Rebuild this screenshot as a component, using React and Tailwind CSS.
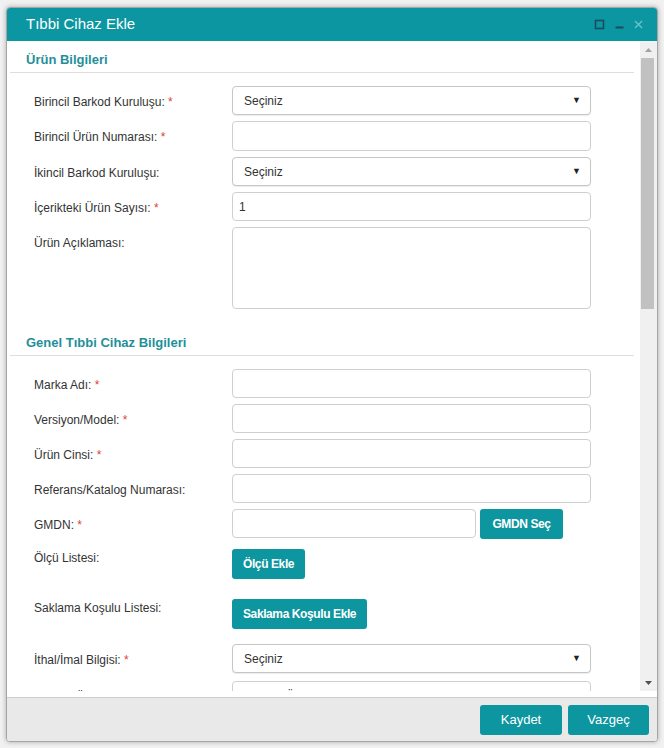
import React from 'react';

const font = { fontFamily: '"Liberation Sans", Arial, sans-serif' };

function Req() {
  return <span className="text-[#e0403a]"> *</span>;
}

function Label({ children, req, top = 'pt-[8px]' }) {
  return (
    <div className={`w-[198px] shrink-0 text-[12px] leading-[17px] text-[#333] ${top}`}>
      {children}
      {req && <Req />}
    </div>
  );
}

function TextBox({ value = '', h = 'h-[29px]', w = 'w-[359px]' }) {
  return (
    <div className={`${h} ${w} rounded-[4px] border border-[#cfcfcf] bg-white pl-[6px] flex items-center text-[12px] text-[#333]`}>
      {value}
    </div>
  );
}

function SelectBox({ text = 'Seçiniz' }) {
  return (
    <div className="h-[29px] w-[359px] rounded-[4px] border border-[#c6c6c6] bg-white pl-[11px] pr-[9px] flex items-center justify-between text-[12px] text-[#333] shadow-[0_1px_1px_rgba(0,0,0,0.08)]">
      <span>{text}</span>
      <span className="text-[9px] text-[#222]">▼</span>
    </div>
  );
}

function TealButton({ children, className = 'px-[11px]' }) {
  return (
    <button className={`h-[30px] whitespace-nowrap rounded-[3px] bg-[#0d95a0] text-[12px] font-bold tracking-[-0.4px] text-white ${className}`}>
      {children}
    </button>
  );
}

function SectionTitle({ children }) {
  return (
    <div className="ml-[3px] mr-[6px] h-[32px] border-b border-[#dedede] pl-[16px] pt-[9px] text-[13px] font-bold text-[#1f8f9a]">
      {children}
    </div>
  );
}

function Row({ children, className = '' }) {
  return <div className={`flex pl-[27px] ${className}`}>{children}</div>;
}

export default function App() {
  return (
    <div className="w-[664px] h-[748px] bg-[#f1f1f1] pt-[7px] pl-[6px]" style={font}>
      <div className="w-[652px] h-[735px] flex flex-col overflow-hidden rounded-[4px] border border-[#a6a6a6] bg-white shadow-[0_0_5px_rgba(0,0,0,0.3)]">
        {/* header */}
        <div className="h-[33px] shrink-0 bg-[#0b96a2] flex items-center justify-between pl-[19px] pr-[14px]">
          <span className="text-[15px] text-white">Tıbbi Cihaz Ekle</span>
          <div className="flex items-center gap-[10px]">
            <svg width="11" height="11" viewBox="0 0 11 11">
              <rect x="1.5" y="1.5" width="8" height="8" fill="none" stroke="#1c4b60" strokeWidth="1.6" />
            </svg>
            <svg width="9" height="11" viewBox="0 0 9 11">
              <rect x="0.5" y="7.5" width="8" height="2" fill="#1c4b60" />
            </svg>
            <svg width="9" height="11" viewBox="0 0 9 11">
              <path d="M1 2 L8 9 M8 2 L1 9" stroke="#6cc6cc" strokeWidth="1.2" />
            </svg>
          </div>
        </div>

        {/* body */}
        <div className="h-[656px] shrink-0 flex flex-col">
          <div className="h-[650px] flex">
            <div className="flex-1 overflow-hidden">
              <SectionTitle>Ürün Bilgileri</SectionTitle>
              <div className="pt-[13px] flex flex-col gap-[6px]">
                <Row>
                  <Label req>Birincil Barkod Kuruluşu:</Label>
                  <SelectBox />
                </Row>
                <Row>
                  <Label req>Birincil Ürün Numarası:</Label>
                  <TextBox h="h-[30px]" />
                </Row>
                <Row>
                  <Label>İkincil Barkod Kuruluşu:</Label>
                  <SelectBox />
                </Row>
                <Row>
                  <Label req>İçerikteki Ürün Sayısı:</Label>
                  <TextBox value="1" />
                </Row>
                <Row>
                  <Label>Ürün Açıklaması:</Label>
                  <TextBox h="h-[82px]" />
                </Row>
              </div>

              <div className="mt-[15px]">
                <SectionTitle>Genel Tıbbi Cihaz Bilgileri</SectionTitle>
              </div>
              <div className="pt-[13px] flex flex-col gap-[6px]">
                <Row>
                  <Label req>Marka Adı:</Label>
                  <TextBox />
                </Row>
                <Row>
                  <Label req>Versiyon/Model:</Label>
                  <TextBox />
                </Row>
                <Row>
                  <Label req>Ürün Cinsi:</Label>
                  <TextBox />
                </Row>
                <Row>
                  <Label>Referans/Katalog Numarası:</Label>
                  <TextBox />
                </Row>
                <Row>
                  <Label req>GMDN:</Label>
                  <div className="flex gap-[4px]">
                    <TextBox w="w-[244px]" />
                    <TealButton className="w-[83px] h-[29px]">GMDN Seç</TealButton>
                  </div>
                </Row>
              </div>
              <Row className="mt-[10px]">
                <Label top="pt-[1px]">Ölçü Listesi:</Label>
                <TealButton>Ölçü Ekle</TealButton>
              </Row>
              <Row className="mt-[20px]">
                <Label top="pt-[1px]">Saklama Koşulu Listesi:</Label>
                <TealButton>Saklama Koşulu Ekle</TealButton>
              </Row>
              <Row className="mt-[15px]">
                <Label req>İthal/İmal Bilgisi:</Label>
                <SelectBox />
              </Row>
              <Row className="mt-[8px]">
                <Label>Menşei Ülke:</Label>
                <div className="h-[29px] w-[359px] rounded-[4px] border border-[#cfcfcf] bg-white pl-[11px] flex items-center text-[12px] text-[#333]">
                  Menşei Ülke Seçiniz
                </div>
              </Row>
            </div>

            {/* scrollbar */}
            <div className="w-[17px] shrink-0 bg-[#f0f0f0] flex flex-col">
              <div className="h-[17px] flex items-center justify-center">
                <svg width="7" height="4" viewBox="0 0 7 4">
                  <path d="M0 4 L3.5 0 L7 4 Z" fill="#a3a3a3" />
                </svg>
              </div>
              <div className="ml-[1px] mr-[3px] h-[251px] bg-[#c1c1c1]" />
              <div className="flex-1" />
              <div className="h-[17px] flex items-center justify-center">
                <svg width="7" height="4" viewBox="0 0 7 4">
                  <path d="M0 0 L7 0 L3.5 4 Z" fill="#505050" />
                </svg>
              </div>
            </div>
          </div>
          <div className="flex-1 bg-white" />
        </div>

        {/* footer */}
        <div className="flex-1 border-t border-[#cdcdcd] bg-[#e9e9e9] flex items-center justify-end gap-[6px] pr-[8px]">
          <button className="h-[30px] w-[82px] rounded-[3px] bg-[#0d95a0] text-[13px] text-white">Kaydet</button>
          <button className="h-[30px] w-[81px] rounded-[3px] bg-[#0d95a0] text-[13px] text-white">Vazgeç</button>
        </div>
      </div>
    </div>
  );
}
